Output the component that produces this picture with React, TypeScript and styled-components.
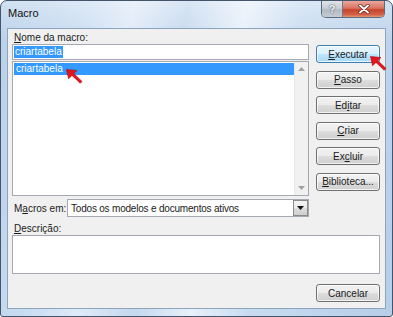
import React from 'react'
import styled, { createGlobalStyle } from 'styled-components'

const GlobalStyle = createGlobalStyle`
    html, body {
        margin: 0;
        padding: 0;
        background: #ffffff;
    }
    * {
        box-sizing: border-box;
    }
`

const uiFont = `'Liberation Sans', Arial, sans-serif`

const buttons = [
    { label: 'Executar', key: 0, isDefault: true },
    { label: 'Passo', key: 0 },
    { label: 'Editar', key: 2 },
    { label: 'Criar', key: 0 },
    { label: 'Excluir', key: 2 },
    { label: 'Biblioteca...', key: 0 },
]

// underline the access key letter
const Mnemonic = ({ text, at }: { text: string, at: number }) => (
    <>
        {text.slice(0, at)}
        <u>{text[at]}</u>
        {text.slice(at + 1)}
    </>
)

const RedArrow = ({ left, top }: { left: number, top: number }) => (
    <ArrowMark style={{ left, top }} width="17" height="15" viewBox="0 0 17 15">
        <polygon points="0.5,0.5 11,1.5 7.8,4.6 16,12.4 14.2,14.3 6,6.4 2.6,9.8" fill="#e8141b" stroke="#a8080e" strokeWidth="0.6" />
    </ArrowMark>
)

const App = () => {
    return (
        <>
            <GlobalStyle />
            <Window>
                <TitleBar>
                    <Title>Macro</Title>
                    <CaptionButtons>
                        <HelpButton>?</HelpButton>
                        <CloseButton>
                            <svg width="12" height="10" viewBox="0 0 12 10">
                                <path d="M2 1.5 L10 8.5 M10 1.5 L2 8.5" stroke="#5a1a12" strokeWidth="3.2" strokeLinecap="round" />
                                <path d="M2 1.5 L10 8.5 M10 1.5 L2 8.5" stroke="#ffffff" strokeWidth="2" strokeLinecap="round" />
                            </svg>
                        </CloseButton>
                    </CaptionButtons>
                </TitleBar>
                <Client>
                    <TopArea>
                        <LeftColumn>
                            <Label><Mnemonic text="Nome da macro:" at={0} /></Label>
                            <NameInput>
                                <Selection>criartabela</Selection>
                            </NameInput>
                            <ListBox>
                                <Items>
                                    <ListItem selected>criartabela</ListItem>
                                </Items>
                                <ScrollBar>
                                    <ScrollArrow>
                                        <svg width="7" height="4" viewBox="0 0 7 4"><polygon points="0,4 3.5,0 7,4" fill="#a0a0a0" /></svg>
                                    </ScrollArrow>
                                    <ScrollArrow>
                                        <svg width="7" height="4" viewBox="0 0 7 4"><polygon points="0,0 3.5,4 7,0" fill="#a0a0a0" /></svg>
                                    </ScrollArrow>
                                </ScrollBar>
                            </ListBox>
                        </LeftColumn>
                        <ButtonColumn>
                            {buttons.map(b => (
                                <DialogButton key={b.label} isDefault={b.isDefault}>
                                    <Mnemonic text={b.label} at={b.key} />
                                </DialogButton>
                            ))}
                        </ButtonColumn>
                    </TopArea>
                    <MacrosRow>
                        <Label><Mnemonic text="Macros em:" at={1} /></Label>
                        <Combo>
                            <ComboText>Todos os modelos e documentos ativos</ComboText>
                            <ComboButton>
                                <svg width="7" height="4" viewBox="0 0 7 4"><polygon points="0,0 3.5,4 7,0" fill="#111" /></svg>
                            </ComboButton>
                        </Combo>
                    </MacrosRow>
                    <DescLabel><Mnemonic text="Descrição:" at={0} /></DescLabel>
                    <DescriptionBox />
                    <Footer>
                        <DialogButton>Cancelar</DialogButton>
                    </Footer>
                </Client>
                <RedArrow left={65} top={68} />
                <RedArrow left={369} top={55} />
            </Window>
        </>
    )
}

const Window = styled.div`
    position: relative;
    width: 393px;
    height: 317px;
    display: flex;
    flex-direction: column;
    padding: 0 6px 7px 6px;
    border: 1px solid #44556b;
    border-radius: 7px 7px 3px 3px;
    background:
        linear-gradient(180deg, rgba(255,255,255,0.35) 0%, rgba(255,255,255,0) 40px),
        linear-gradient(100deg, #b9d0ea 0%, #c9dcf1 18%, #dfeaf7 30%, #c4d8ee 42%, #e8f0fa 55%, #c8dbf0 68%, #b7cee8 100%);
    font-family: ${uiFont};
    overflow: hidden;
`

const TitleBar = styled.div`
    height: 28px;
    display: flex;
    justify-content: space-between;
    align-items: flex-start;
`

const Title = styled.div`
    padding: 6px 0 0 1px;
    font-size: 11px;
    color: #111;
`

const CaptionButtons = styled.div`
    display: flex;
    margin-right: 1px;
    border: 1px solid #5e6b7e;
    border-top: none;
    border-radius: 0 0 5px 5px;
    overflow: hidden;
    height: 17px;
`

const HelpButton = styled.div`
    width: 21px;
    display: flex;
    align-items: center;
    justify-content: center;
    font-size: 11px;
    font-weight: bold;
    color: #f4f6f8;
    text-shadow: 0 0 2px #56606c, 0 0 1px #56606c;
    background: linear-gradient(180deg, #dfe3e8 0%, #c9ced6 45%, #b3bac4 55%, #c6ccd4 100%);
    border-right: 1px solid #6c7a8c;
`

const CloseButton = styled.div`
    width: 41px;
    display: flex;
    align-items: center;
    justify-content: center;
    background: linear-gradient(180deg, #e9a99c 0%, #d9735f 45%, #c7432a 55%, #d3604a 85%, #e59a6e 100%);
`

const Client = styled.div`
    flex: 1;
    display: flex;
    flex-direction: column;
    padding: 2px 5px 6px 4px;
    background: #f0f0f0;
    border: 1px solid #8ea3bc;
    font-size: 10px;
    color: #1a1a1a;
`

const TopArea = styled.div`
    display: flex;
    justify-content: space-between;
`

const LeftColumn = styled.div`
    width: 297px;
    display: flex;
    flex-direction: column;
`

const Label = styled.div`
    height: 13px;
    line-height: 13px;
    padding-left: 2px;
    white-space: nowrap;
`

const NameInput = styled.div`
    height: 16px;
    display: flex;
    align-items: center;
    padding-left: 1px;
    background: #ffffff;
    border: 1px solid #a4a8b0;
`

const Selection = styled.span`
    line-height: 12px;
    padding: 0 1px;
    background: #3399ff;
    color: #ffffff;
`

const ListBox = styled.div`
    height: 135px;
    margin-top: 1px;
    display: flex;
    background: #ffffff;
    border: 1px solid #a4a8b0;
`

const Items = styled.div`
    flex: 1;
    padding: 1px 0 0 1px;
`

const ListItem = styled.div<{ selected?: boolean }>`
    height: 12px;
    line-height: 12px;
    padding-left: 2px;
    background: ${props => props.selected ? '#3399ff' : 'transparent'};
    color: ${props => props.selected ? '#ffffff' : '#111'};
`

const ScrollBar = styled.div`
    width: 14px;
    display: flex;
    flex-direction: column;
    justify-content: space-between;
    background: #f1f1f1;
    border-left: 1px solid #e6e6e6;
`

const ScrollArrow = styled.div`
    height: 14px;
    display: flex;
    align-items: center;
    justify-content: center;
`

const ButtonColumn = styled.div`
    width: 64px;
    margin-top: 14px;
    display: flex;
    flex-direction: column;
    gap: 7.5px;
`

const DialogButton = styled.div<{ isDefault?: boolean }>`
    width: 64px;
    height: 18px;
    display: flex;
    align-items: center;
    justify-content: center;
    white-space: nowrap;
    border-radius: 3px;
    font-size: 10px;
    color: #1a1a1a;
    border: 1px solid ${props => props.isDefault ? '#3c7fb1' : '#707070'};
    background: ${props => props.isDefault
        ? 'linear-gradient(180deg, #eaf6fd 0%, #d9f0fc 50%, #bee6fd 51%, #a7d9f5 100%)'
        : 'linear-gradient(180deg, #f2f2f2 0%, #ebebeb 50%, #dddddd 51%, #cfcfcf 100%)'};
    box-shadow: inset 0 0 0 1px rgba(255, 255, 255, 0.75);
`

const MacrosRow = styled.div`
    margin-top: 3px;
    width: 297px;
    display: flex;
    align-items: center;
    justify-content: space-between;
`

const Combo = styled.div`
    width: 242px;
    height: 18px;
    display: flex;
    align-items: center;
    background: #ffffff;
    border: 1px solid #a4a8b0;
`

const ComboText = styled.div`
    flex: 1;
    padding-left: 3px;
    white-space: nowrap;
    letter-spacing: -0.2px;
`

const ComboButton = styled.div`
    width: 15px;
    height: 16px;
    display: flex;
    align-items: center;
    justify-content: center;
    border: 1px solid #8a8a8a;
    background: linear-gradient(180deg, #f2f2f2 0%, #ebebeb 50%, #dddddd 51%, #cfcfcf 100%);
`

const DescLabel = styled(Label)`
    margin-top: 5px;
`

const DescriptionBox = styled.div`
    height: 39px;
    background: #ffffff;
    border: 1px solid #a4a8b0;
`

const Footer = styled.div`
    margin-top: 10px;
    display: flex;
    justify-content: flex-end;
`

const ArrowMark = styled.svg`
    position: absolute;
`

export default App
